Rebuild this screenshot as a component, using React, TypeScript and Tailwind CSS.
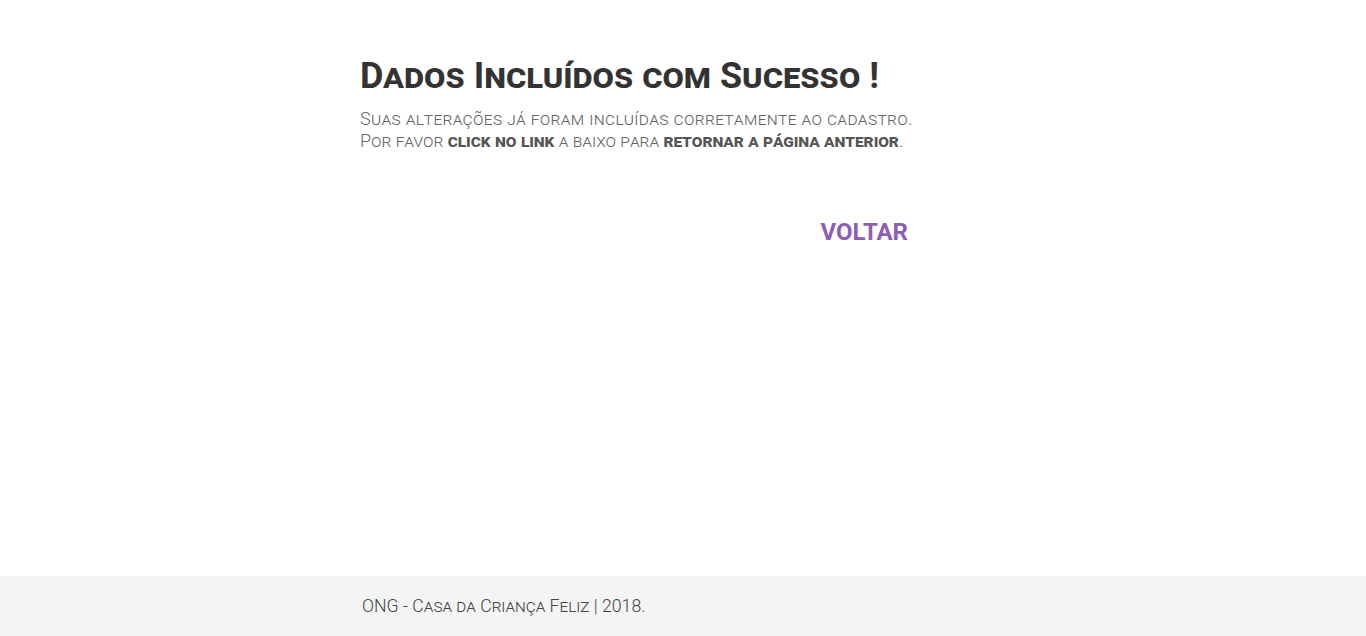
export default function App() {
  return (
    <div className="flex min-h-screen flex-col bg-white font-['Roboto',sans-serif]">
      <main className="flex-1">
        <div className="ml-[360px] w-[570px] pt-[52px]">
          <h1 className="text-[36px] font-bold leading-[48px] text-[#333] [font-variant:small-caps]">
            Dados Incluídos com Sucesso !
          </h1>
          <p className="mt-[8px] text-[18px] font-light leading-[22px] text-[#666] [font-variant:small-caps]">
            <span className="tracking-[0.32px]">Suas alterações já foram incluídas corretamente ao cadastro.</span>
            <br />
            <span className="tracking-[-0.05px]">
              Por favor <span className="font-bold text-[#555]">click no link</span> a baixo para{" "}
              <span className="font-bold text-[#555]">retornar a página anterior</span>.
            </span>
          </p>
          <div className="mt-[62px] flex w-[552px] justify-end pr-[4px]">
            <a href="#" className="text-[24px] font-bold text-[#8e5db8]">
              VOLTAR
            </a>
          </div>
        </div>
      </main>
      <footer className="h-[60px] bg-[#f4f4f4]">
        <p className="ml-[362px] pt-[18px] text-[17.7px] font-light leading-[24px] text-[#444] [font-variant:small-caps]">
          ONG - Casa da Criança Feliz | 2018.
        </p>
      </footer>
    </div>
  );
}
